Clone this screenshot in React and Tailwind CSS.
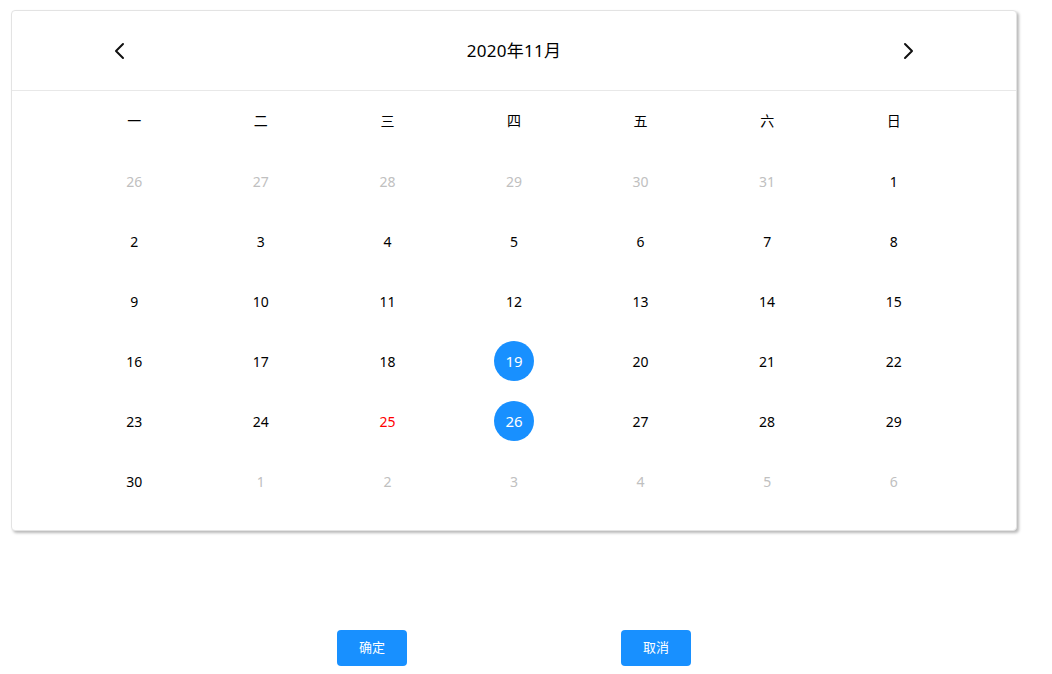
const weekdays = ["一", "二", "三", "四", "五", "六", "日"];

const days = [
	...[26, 27, 28, 29, 30, 31].map((d) => ({ d, muted: true })),
	...Array.from({ length: 30 }, (_, i) => ({ d: i + 1 })),
	...[1, 2, 3, 4, 5, 6].map((d) => ({ d, muted: true })),
];

const Chevron = ({ dir }) => (
	<svg width="12" height="20" viewBox="0 0 12 20" fill="none">
		<polyline
			points={dir === "left" ? "9,3 2,10 9,17" : "3,3 10,10 3,17"}
			stroke="#111"
			strokeWidth="2"
			strokeLinecap="round"
			strokeLinejoin="round"
		/>
	</svg>
);

export default function App() {
	return (
		<div
			className="w-[1052px] h-[674px] bg-white text-black"
			style={{ fontFamily: '"Noto Sans", "Noto Sans CJK SC", sans-serif' }}
		>
			<div className="pt-[10px] pl-[11px]">
				<div className="w-[1006px] rounded-[4px] border border-[#e3e3e3] bg-white shadow-[2px_2px_3px_rgba(0,0,0,0.28)]">
					<div className="h-[80px] flex items-center justify-between px-[102px] border-b border-[#e8e8e8]">
						<Chevron dir="left" />
						<span className="text-[17px] tracking-[0.3px]">2020年11月</span>
						<Chevron dir="right" />
					</div>
					<div className="px-[59px] pb-[19px]">
						<div className="grid grid-cols-7">
							{weekdays.map((w) => (
								<div key={w} className="h-[60px] pb-[2px] flex items-center justify-center text-[14px]">
									{w}
								</div>
							))}
							{days.map((x, i) => {
								const selected = !x.muted && (x.d === 19 || x.d === 26);
								const red = !x.muted && x.d === 25;
								return (
									<div key={i} className="h-[60px] flex items-center justify-center">
										{selected ? (
											<span className="w-[40px] h-[40px] rounded-full bg-[#1890ff] text-white flex items-center justify-center text-[15px]">
												{x.d}
											</span>
										) : (
											<span
												className={
													"text-[14px] " +
													(x.muted ? "text-[#c0c0c0]" : red ? "text-[#ff0000]" : "text-black")
												}
											>
												{x.d}
											</span>
										)}
									</div>
								);
							})}
						</div>
					</div>
				</div>
			</div>
			<div className="flex mt-[99px] pl-[337px] gap-[214px]">
				<button className="w-[70px] h-[36px] rounded-[4px] bg-[#1890ff] text-white text-[13px]">
					确定
				</button>
				<button className="w-[70px] h-[36px] rounded-[4px] bg-[#1890ff] text-white text-[13px]">
					取消
				</button>
			</div>
		</div>
	);
}
